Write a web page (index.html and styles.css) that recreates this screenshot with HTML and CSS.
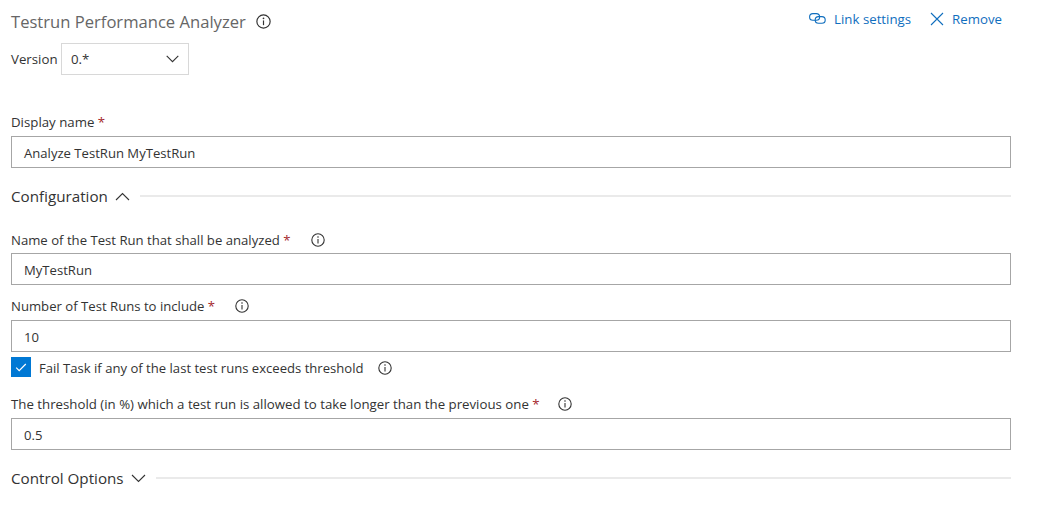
FILE: index.html
```html
<!DOCTYPE html>
<html lang="en">
<head>
  <meta charset="UTF-8">
  <title>Testrun Performance Analyzer</title>
  <link rel="stylesheet" href="styles.css">
</head>
<body>
  <svg class="icon-defs" width="0" height="0">
    <symbol id="info" viewBox="0 0 14 14">
      <circle cx="7" cy="7" r="6.2" fill="none" stroke="currentColor" stroke-width="1.1"/>
      <path d="M7 6v4.4" fill="none" stroke="currentColor" stroke-width="1.1"/>
      <circle cx="7" cy="4" r=".8" fill="currentColor"/>
    </symbol>
  </svg>

  <div class="task-panel">
    <!-- header -->
    <div class="task-header">
      <h1 class="task-title">Testrun Performance Analyzer</h1>
      <svg class="info info-title"><use href="#info"/></svg>
      <div class="task-actions">
        <a class="action action-link">
          <svg width="17" height="11" viewBox="0 0 17 11" fill="none" stroke="currentColor" stroke-width="1.1">
            <rect x=".6" y=".6" width="10" height="6.6" rx="3.3"/>
            <rect x="6.2" y="3.6" width="10" height="6.6" rx="3.3"/>
          </svg>
          Link settings
        </a>
        <a class="action action-remove">
          <svg width="14" height="14" viewBox="0 0 14 14" fill="none" stroke="currentColor" stroke-width="1.1">
            <path d="M1 1l12 12M13 1L1 13"/>
          </svg>
          Remove
        </a>
      </div>
    </div>

    <div class="version-row">
      <span class="version-label">Version</span>
      <div class="version-select">
        <span>0.*</span>
        <svg width="13" height="8" viewBox="0 0 13 8" fill="none" stroke="currentColor" stroke-width="1.1">
          <path d="M.7.9l5.8 5.8L12.3.9"/>
        </svg>
      </div>
    </div>

    <!-- display name -->
    <div class="field field-display">
      <label class="field-label">Display name <span class="req">*</span></label>
      <div class="text-input">Analyze TestRun MyTestRun</div>
    </div>

    <!-- configuration -->
    <div class="section section-config">
      <span class="section-name">Configuration</span>
      <svg width="15" height="9" viewBox="0 0 15 9" fill="none" stroke="currentColor" stroke-width="1.1">
        <path d="M1 8l6.5-6.5L14 8"/>
      </svg>
      <div class="section-line"></div>
    </div>

    <div class="field field-name">
      <label class="field-label">Name of the Test Run that shall be analyzed <span class="req">*</span>
        <svg class="info"><use href="#info"/></svg></label>
      <div class="text-input">MyTestRun</div>
    </div>

    <div class="field field-number">
      <label class="field-label">Number of Test Runs to include <span class="req">*</span>
        <svg class="info"><use href="#info"/></svg></label>
      <div class="text-input">10</div>
    </div>

    <div class="check-row">
      <span class="checkbox">
        <svg width="12" height="9" viewBox="0 0 12 9" fill="none" stroke="#fff" stroke-width="1.2">
          <path d="M1.2 4.6l3 3L10.8 1"/>
        </svg>
      </span>
      <span class="check-label">Fail Task if any of the last test runs exceeds threshold</span>
      <svg class="info"><use href="#info"/></svg>
    </div>

    <div class="field field-threshold">
      <label class="field-label">The threshold (in %) which a test run is allowed to take longer than the previous one <span class="req">*</span>
        <svg class="info"><use href="#info"/></svg></label>
      <div class="text-input">0.5</div>
    </div>

    <!-- control options -->
    <div class="section section-control">
      <span class="section-name">Control Options</span>
      <svg width="15" height="9" viewBox="0 0 15 9" fill="none" stroke="currentColor" stroke-width="1.1">
        <path d="M1 1l6.5 6.5L14 1"/>
      </svg>
      <div class="section-line"></div>
    </div>
  </div>
</body>
</html>
```

FILE: styles.css
```css
/* ===== General ===== */
body {
  font-family: 'Open Sans', 'Noto Sans', sans-serif;
  font-size: 13.25px;
  margin: 0;
  background-color: #fff;
  color: #333;
}

.icon-defs {
  display: block;
}

.task-panel {
  width: 1000px;
  padding-left: 11px;
}

.info {
  width: 14px;
  height: 14px;
  color: #333;
  margin-left: 15px;
  vertical-align: -2px;
}

/* ===== Header ===== */
.task-header {
  display: flex;
  align-items: center;
  height: 43px;
}

.task-title {
  font-size: 16.6px;
  font-weight: 400;
  color: #666;
  margin: 0;
}

.info-title {
  width: 15px;
  height: 15px;
  margin-left: 10px;
}

.task-actions {
  display: flex;
  gap: 19px;
  margin-left: auto;
  margin-right: 9px;
  margin-top: -6px;
}

.action {
  display: flex;
  align-items: center;
  gap: 8px;
  color: #106ebe;
}

.action-link svg {
  margin-top: -1px;
}

/* ===== Version ===== */
.version-row {
  display: flex;
  align-items: center;
}

.version-label {
  width: 50px;
}

.version-select {
  display: flex;
  align-items: center;
  justify-content: space-between;
  width: 128px;
  height: 32px;
  padding: 0 9px;
  border: 1px solid #d8d8d8;
  box-sizing: border-box;
}

/* ===== Fields ===== */
.field-label {
  display: block;
  line-height: 17px;
}

.req {
  color: #a4262c;
}

.text-input {
  height: 32px;
  line-height: 32px;
  font-size: 13.1px;
  padding: 0 12px;
  border: 1px solid #a6a6a6;
  box-sizing: border-box;
  margin-top: 4px;
}

.field-display {
  margin-top: 39px;
}

.field-display .text-input {
  margin-top: 5px;
}

.field-name {
  margin-top: 25px;
}

.field-number {
  margin-top: 13px;
}

.field-name .field-label,
.field-number .field-label {
  font-size: 13.15px;
}

.field-name .info {
  margin-left: 17px;
}

.field-number .info {
  margin-left: 16px;
}

.field-number .text-input,
.field-threshold .text-input {
  margin-top: 5px;
}

.field-threshold {
  margin-top: 19px;
}

/* ===== Sections ===== */
.section {
  display: flex;
  align-items: center;
  height: 22px;
}

.section-name {
  font-size: 15.2px;
}

.section > svg {
  margin-left: 7px;
}

.section-line {
  flex: 1;
  height: 2px;
  background-color: #eaeaea;
  margin-left: 10px;
}

.section-config {
  margin-top: 17px;
}

.section-control {
  margin-top: 17px;
}

/* ===== Checkbox ===== */
.check-row {
  display: flex;
  align-items: center;
  margin-top: 5px;
}

.checkbox {
  display: flex;
  align-items: center;
  justify-content: center;
  width: 20px;
  height: 20px;
  background-color: #0078d4;
}

.check-label {
  font-size: 13.1px;
  margin-left: 8px;
  padding-top: 1px;
}

.check-row .info {
  margin-left: 14px;
  margin-top: 2px;
}
```
